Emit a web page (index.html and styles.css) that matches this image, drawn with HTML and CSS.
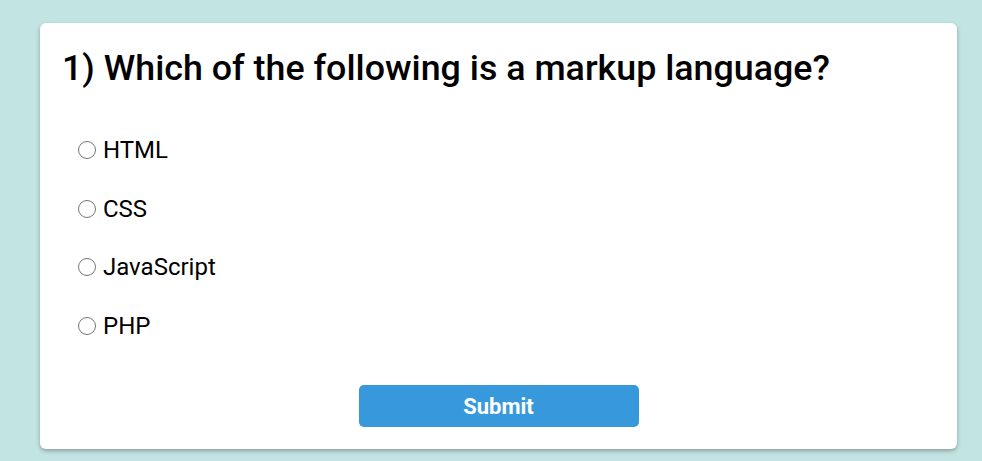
FILE: index.html
```html
<!DOCTYPE html>
<html>
<head>
<meta charset="utf-8">
<link rel="stylesheet" href="styles.css">
</head>
<body>
<div class="quiz">
  <h2 class="question">1) Which of the following is a markup language?</h2>
  <ul class="answers">
    <li><label><input type="radio" name="q1"> HTML</label></li>
    <li><label><input type="radio" name="q1"> CSS</label></li>
    <li><label><input type="radio" name="q1"> JavaScript</label></li>
    <li><label><input type="radio" name="q1"> PHP</label></li>
  </ul>
  <div class="actions"><button class="submit">Submit</button></div>
</div>
</body>
</html>
```
FILE: styles.css
```css
html, body {
  margin: 0;
  background: #c2e5e3;
  font-family: Roboto, "Liberation Sans", sans-serif;
}
body {
  padding: 23px 25px 12px 40px;
}
.quiz {
  background: #fff;
  border-radius: 6px;
  box-shadow: 0 2px 4px rgba(0, 0, 0, 0.3);
  height: 426px;
  box-sizing: border-box;
  padding: 0 22px;
  display: flex;
  flex-direction: column;
}
.question {
  margin: 0;
  padding-top: 24px;
  font-size: 35.8px;
  font-weight: 500;
  line-height: 42px;
  color: #000;
}
.answers {
  list-style: none;
  margin: 47px 0 0;
  padding: 0 0 0 16px;
  display: flex;
  flex-direction: column;
  gap: 30.5px;
}
.answers li {
  font-size: 24px;
  line-height: 28px;
  color: #000;
}
.answers label {
  display: flex;
  align-items: center;
  gap: 7px;
}
.answers input {
  -webkit-appearance: none;
  appearance: none;
  box-sizing: border-box;
  margin: 0;
  width: 18px;
  height: 18px;
  border: 1.5px solid #767676;
  border-radius: 50%;
  background: #fff;
}
.answers input:checked {
  background: radial-gradient(circle, #3799db 0 4px, #fff 4.5px);
  border-color: #3799db;
}
.actions {
  margin-top: auto;
  padding-bottom: 22px;
  display: flex;
  justify-content: center;
}
.submit {
  width: 280px;
  height: 42px;
  background: #3799db;
  color: #fff;
  border: none;
  border-radius: 5px;
  font-family: Roboto, "Liberation Sans", sans-serif;
  font-size: 22px;
  font-weight: 700;
}
```
